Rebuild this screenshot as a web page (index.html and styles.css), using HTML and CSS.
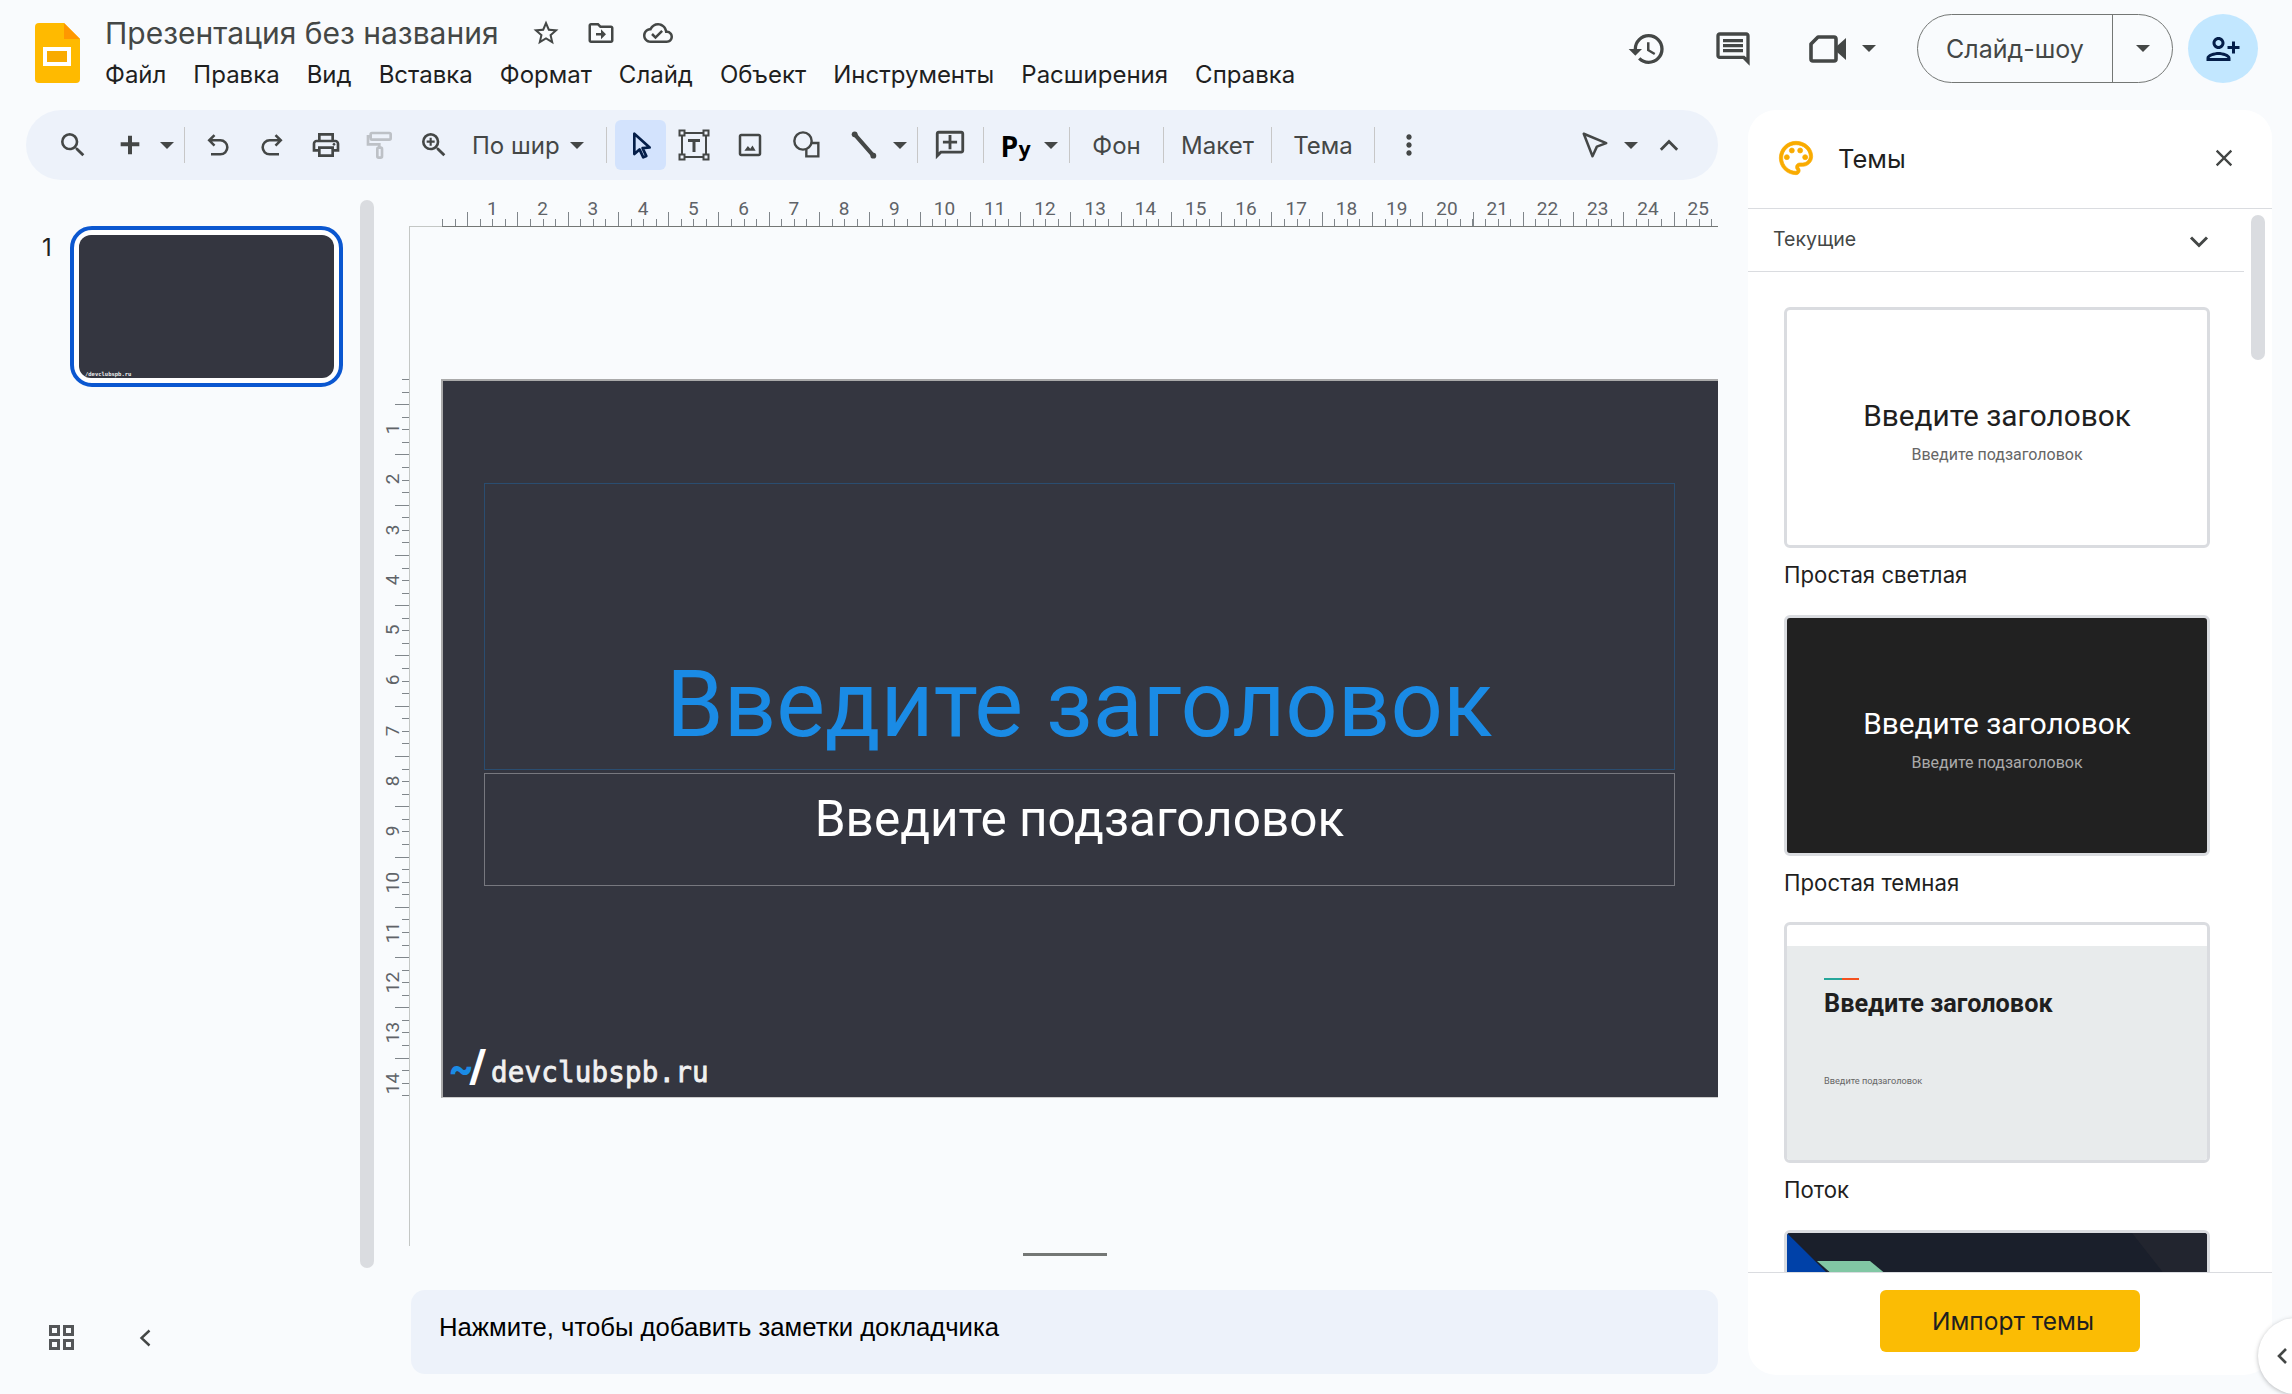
FILE: index.html
```html
<!DOCTYPE html>
<html lang="ru">
<head>
    <meta charset="UTF-8">
    <title>Презентация без названия</title>
    <link rel="stylesheet" href="styles.css">
</head>
<body>
    <header class="header">
        <svg class="logo" viewBox="0 0 45 60">
            <path d="M4 0H29L45 16V56a4 4 0 0 1-4 4H4a4 4 0 0 1-4-4V4a4 4 0 0 1 4-4z" fill="#ffba00"/>
            <path d="M29 0L45 16H29z" fill="#ff9800"/>
            <rect x="10" y="26" width="24" height="15" fill="#f9ab00" stroke="#fff" stroke-width="4"/>
        </svg>
        <div class="doc">
            <div class="doc-title">
                <span class="doc-name">Презентация без названия</span>
                <svg class="ic-30 star" viewBox="0 0 24 24"><path d="M22 9.24l-7.19-.62L12 2 9.19 8.63 2 9.24l5.46 4.73L5.82 21 12 17.27 18.18 21l-1.63-7.03L22 9.24zM12 15.4l-3.76 2.27 1-4.28-3.32-2.88 4.38-.38L12 6.1l1.71 4.04 4.38.38-3.32 2.88 1 4.28L12 15.4z"/></svg>
                <svg class="ic-30 move" viewBox="0 0 24 24"><path d="M20 6h-8l-2-2H4c-1.1 0-2 .9-2 2v12c0 1.1.9 2 2 2h16c1.1 0 2-.9 2-2V8c0-1.1-.9-2-2-2zm0 12H4V6h5.17l2 2H20v10zm-8-4H8v-2h4V9l4 4-4 4v-3z"/></svg>
                <svg class="ic-30 cloud" viewBox="0 0 24 24"><path d="M19.35 10.04C18.67 6.59 15.64 4 12 4 9.11 4 6.6 5.64 5.35 8.04 2.34 8.36 0 10.91 0 14c0 3.31 2.69 6 6 6h13c2.76 0 5-2.24 5-5 0-2.64-2.05-4.78-4.65-4.96zM19 18H6c-2.21 0-4-1.79-4-4 0-2.05 1.53-3.76 3.56-3.97l1.07-.11.5-.95C8.08 7.14 9.94 6 12 6c2.62 0 4.88 1.86 5.39 4.43l.3 1.5 1.53.11c1.56.1 2.78 1.41 2.78 2.96 0 1.65-1.35 3-3 3zm-9-3.82l-2.09-2.09L6.5 13.5 10 17l6.01-6.01-1.41-1.41z"/></svg>
            </div>
            <nav class="menu">
                <span>Файл</span><span>Правка</span><span>Вид</span><span>Вставка</span><span>Формат</span><span>Слайд</span><span>Объект</span><span>Инструменты</span><span>Расширения</span><span>Справка</span>
            </nav>
        </div>
        <div class="actions">
            <svg class="ic-40 history" viewBox="0 0 24 24"><path d="M13 3a9 9 0 0 0-9 9H1l3.89 3.89.07.14L9 12H6c0-3.87 3.13-7 7-7s7 3.13 7 7-3.13 7-7 7c-1.93 0-3.68-.79-4.94-2.06l-1.42 1.42A8.954 8.954 0 0 0 13 21a9 9 0 0 0 0-18zm-1 5v5l4.28 2.54.72-1.21-3.5-2.08V8H12z"/></svg>
            <svg class="ic-40 comments" viewBox="0 0 24 24"><path d="M21.99 4c0-1.1-.89-2-1.99-2H4c-1.1 0-2 .9-2 2v12c0 1.1.9 2 2 2h14l4 4-.01-18zM20 4v13.17L18.83 16H4V4h16zM6 12h12v2H6zm0-3h12v2H6zm0-3h12v2H6z"/></svg>
            <svg class="ic-40 meet" viewBox="0 0 40 40"><path d="M10 8h16a2 2 0 0 1 2 2v20a2 2 0 0 1-2 2H5a2 2 0 0 1-2-2V15z" fill="none" stroke="#444746" stroke-width="3.600" stroke-linejoin="round"/><path d="M29 17l9-8v22l-9-8z" fill="#444746"/></svg>
            <span class="caret meet-caret"></span>
            <div class="show-btn">
                <span class="show-label">Слайд-шоу</span>
                <span class="show-drop"><span class="caret"></span></span>
            </div>
            <div class="share">
                <svg class="ic-36" viewBox="0 0 24 24"><g transform="matrix(-1 0 0 1 24 0)"><path d="M15 12c2.21 0 4-1.79 4-4s-1.79-4-4-4-4 1.79-4 4 1.79 4 4 4zm0-6c1.1 0 2 .9 2 2s-.9 2-2 2-2-.9-2-2 .9-2 2-2zm0 8c-2.67 0-8 1.34-8 4v2h16v-2c0-2.66-5.33-4-8-4zm-6 4c.22-.72 3.31-2 6-2 2.7 0 5.8 1.29 6 2H9zm-3-3v-3h3v-2H6V7H4v3H1v2h3v3h2z"/></g></svg>
            </div>
        </div>
    </header>

    <div class="page">
        <div class="left">
            <div class="toolbar">
                <span class="tb w54"><svg class="ic-32" viewBox="0 0 24 24"><path d="M15.5 14h-.79l-.28-.27A6.471 6.471 0 0 0 16 9.5 6.5 6.5 0 1 0 9.5 16c1.61 0 3.09-.59 4.23-1.57l.27.28v.79l5 4.99L20.49 19l-4.99-5zm-6 0C7.01 14 5 11.99 5 9.5S7.01 5 9.5 5 14 7.01 14 9.5 11.99 14 9.5 14z"/></svg></span>
                <span class="tb w60"><svg class="ic-32" viewBox="0 0 24 24"><path d="M19 13h-5.500v6h-3v-6H5v-3h5.500V5h3v5H19z"/></svg></span>
                <span class="tb w14"><span class="caret"></span></span>
                <span class="sep s-10-6"></span>
                <span class="tb w54"><svg class="ic-28" viewBox="0 0 24 24"><path d="M9 3.500L4.500 8 9 12.500M4.500 8H14a6 6 0 0 1 0 12H6" fill="none" stroke="#444746" stroke-width="2.200"/></svg></span>
                <span class="tb w54"><svg class="ic-28" viewBox="0 0 24 24"><path d="M15 3.500L19.500 8 15 12.500M19.500 8H10a6 6 0 0 0 0 12h8" fill="none" stroke="#444746" stroke-width="2.200"/></svg></span>
                <span class="tb w54"><svg class="ic-32" viewBox="0 0 24 24"><path d="M19 8h-1V3H6v5H5c-1.66 0-3 1.34-3 3v6h4v4h12v-4h4v-6c0-1.66-1.34-3-3-3zM8 5h8v3H8V5zm8 12v2H8v-4h8v2zm2-2v-2H6v2H4v-4c0-.55.45-1 1-1h14c.55 0 1 .45 1 1v4h-2z"/><circle cx="18" cy="11.5" r="1"/></svg></span>
                <span class="tb w54"><svg class="ic-32" viewBox="0 0 24 24"><g fill="none" stroke="#bdc1c6" stroke-width="2"><rect x="5" y="3" width="15" height="5" rx="1"/><path d="M5 5.5H3v6h8.5V14"/><rect x="10" y="14" width="3.500" height="7.500" rx="1"/></g></svg></span>
                <span class="tb w54"><svg class="ic-32" viewBox="0 0 24 24"><path d="M15.500 14h-.79l-.28-.27A6.471 6.471 0 0 0 16 9.500 6.500 6.500 0 1 0 9.500 16c1.610 0 3.090-.59 4.230-1.570l.27.28v.79l5 4.990L20.490 19l-4.990-5zm-6 0C7.010 14 5 11.990 5 9.500S7.010 5 9.500 5 14 7.010 14 9.500 11.990 14 9.500 14z"/><path d="M12.500 10.300h-2.200v2.200H8.700v-2.200H6.500V8.700h2.200V6.500h1.600v2.200h2.200z"/></svg></span>
                <span class="tb-zoom">По шир</span>
                <span class="tb w14"><span class="caret"></span></span>
                <span class="sep s-22-8"></span>
                <span class="tb w51 active"><svg class="ic-32" viewBox="0 0 24 24"><path d="M7 3.500v15.300l3.900-3.500 2.800 6 2.300-1-2.800-6 5.300-.4z" fill="none" stroke="#041e49" stroke-width="2" stroke-linejoin="round"/></svg></span>
                <span class="tb w56"><svg class="ic-32" viewBox="0 0 32 32"><g fill="none" stroke="#444746" stroke-width="2"><rect x="1.500" y="1.500" width="5" height="5"/><rect x="25.500" y="1.500" width="5" height="5"/><rect x="1.500" y="25.500" width="5" height="5"/><rect x="25.500" y="25.500" width="5" height="5"/><path d="M6.500 4h19M6.500 28h19M4 6.500v19M28 6.500v19"/></g><path d="M10 10h12v3h-4.500v10h-3V13H10z" fill="#444746"/></svg></span>
                <span class="tb w56"><svg class="ic-30" viewBox="0 0 24 24"><path d="M19 5v14H5V5h14m0-2H5c-1.100 0-2 .9-2 2v14c0 1.100.9 2 2 2h14c1.100 0 2-.9 2-2V5c0-1.100-.9-2-2-2z"/><path d="M7.500 16.500l2.800-3.800 1.900 2.300 1.800-2.700 2.500 4.200z"/></svg></span>
                <span class="tb w58"><svg class="ic-32" viewBox="0 0 24 24"><g fill="none" stroke="#444746" stroke-width="1.800"><circle cx="9" cy="9" r="6.500"/><path d="M15 10.500h5.500v10h-9v-5"/></g></svg></span>
                <span class="tb w56"><svg class="ic-32" viewBox="0 0 24 24"><path d="M5 4l14 16" stroke="#444746" stroke-width="3" stroke-linecap="round"/><circle cx="5" cy="4" r="2.200"/><circle cx="19" cy="20" r="2.200"/></svg></span>
                <span class="tb w14 ml-1"><span class="caret"></span></span>
                <span class="sep s-10-5"></span>
                <span class="tb w54"><svg class="ic-34" viewBox="0 0 24 24"><path d="M20 2H4c-1.100 0-2 .9-2 2v18l4-4h14c1.100 0 2-.9 2-2V4c0-1.100-.9-2-2-2zm0 14H5.170L4 17.170V4h16v12zm-7-11h-2v4H7v2h4v4h2v-4h4V9h-4z"/></svg></span>
                <span class="sep s-6-5"></span>
                <span class="tb w54 input-tool">Р<small>у</small></span>
                <span class="tb w14 ml-1"><span class="caret"></span></span>
                <span class="sep s-11-0"></span>
                <span class="tb-text w93">Фон</span>
                <span class="sep"></span>
                <span class="tb-text w107">Макет</span>
                <span class="sep"></span>
                <span class="tb-text w102">Тема</span>
                <span class="sep"></span>
                <span class="tb w68"><svg class="ic-32" viewBox="0 0 24 24"><path d="M12 8c1.100 0 2-.9 2-2s-.9-2-2-2-2 .9-2 2 .9 2 2 2zm0 2c-1.100 0-2 .9-2 2s.9 2 2 2 2-.9 2-2-.9-2-2-2zm0 6c-1.100 0-2 .9-2 2s.9 2 2 2 2-.9 2-2-.9-2-2-2z"/></svg></span>
                <span class="tb w50 push"><svg class="ic-30" viewBox="0 0 24 24"><path d="M3 3l18 7.500-7.500 2.800L10 21z" fill="none" stroke="#444746" stroke-width="2" stroke-linejoin="round"/></svg></span>
                <span class="tb w14 ml-4"><span class="caret"></span></span>
                <span class="tb w40 ml-11"><svg class="ic-28" viewBox="0 0 24 24"><path d="M5 16l7-7 7 7" fill="none" stroke="#444746" stroke-width="2.400"/></svg></span>
            </div>

            <div class="work">
                <aside class="film">
                    <div class="film-item">
                        <span class="film-num">1</span>
                        <div class="thumb-frame">
                            <div class="thumb"><span class="thumb-logo">/devclubspb.ru</span></div>
                        </div>
                    </div>
                    <div class="film-foot">
                        <svg class="grid-ic" viewBox="0 0 25 25"><g fill="none" stroke="#545658" stroke-width="3"><rect x="1.500" y="1.500" width="8" height="8"/><rect x="15.500" y="1.500" width="8" height="8"/><rect x="1.500" y="15.500" width="8" height="8"/><rect x="15.500" y="15.500" width="8" height="8"/></g></svg>
                        <svg class="back-ic" viewBox="0 0 12 18"><path d="M10.500 1.500L2.500 9l8 7.500" fill="none" stroke="#444746" stroke-width="2.400"/></svg>
                    </div>
                </aside>
                <div class="vscroll"></div>
                <main class="editor">
                    <div class="stage">
                        <div class="corner"></div>
                        <div class="hruler">
                            <div class="hticks">
                                <span>1</span><span>2</span><span>3</span><span>4</span><span>5</span><span>6</span><span>7</span><span>8</span><span>9</span><span>10</span><span>11</span><span>12</span><span>13</span><span>14</span><span>15</span><span>16</span><span>17</span><span>18</span><span>19</span><span>20</span><span>21</span><span>22</span><span>23</span><span>24</span><span>25</span>
                            </div>
                        </div>
                        <div class="vruler">
                            <div class="vticks">
                                <span>1</span><span>2</span><span>3</span><span>4</span><span>5</span><span>6</span><span>7</span><span>8</span><span>9</span><span>10</span><span>11</span><span>12</span><span>13</span><span>14</span>
                            </div>
                        </div>
                        <div class="viewport">
                            <div class="slide">
                                <div class="ph ph-title"><span>Введите заголовок</span></div>
                                <div class="ph ph-sub"><span>Введите подзаголовок</span></div>
                                <div class="brand"><span class="tilde">~</span><span class="slash">/</span><span class="domain">devclubspb.ru</span></div>
                            </div>
                        </div>
                    </div>
                    <div class="handle"></div>
                    <div class="notes">Нажмите, чтобы добавить заметки докладчика</div>
                </main>
            </div>
        </div>

        <aside class="panel">
            <div class="panel-head">
                <svg class="ic-40 palette" viewBox="0 0 24 24"><path d="M12 22C6.490 22 2 17.510 2 12S6.490 2 12 2s10 4.040 10 9c0 3.310-2.690 6-6 6h-1.770c-.28 0-.5.22-.5.5 0 .12.05.23.13.33.41.47.64 1.060.64 1.670A2.500 2.500 0 0 1 12 22zm0-18c-4.410 0-8 3.590-8 8s3.590 8 8 8c.28 0 .5-.22.5-.5a.54.54 0 0 0-.14-.35c-.41-.46-.63-1.050-.63-1.650a2.500 2.500 0 0 1 2.500-2.500H16c2.210 0 4-1.790 4-4 0-3.860-3.590-7-8-7z"/><circle cx="6.500" cy="11.500" r="1.500"/><circle cx="9.500" cy="7.500" r="1.500"/><circle cx="14.500" cy="7.500" r="1.500"/><circle cx="17.500" cy="11.500" r="1.500"/></svg>
                <span class="panel-title">Темы</span>
                <svg class="ic-28 close" viewBox="0 0 24 24"><path d="M19 6.410L17.590 5 12 10.590 6.410 5 5 6.410 10.590 12 5 17.590 6.410 19 12 13.410 17.590 19 19 17.590 13.410 12z"/></svg>
            </div>
            <div class="panel-section">
                <span>Текущие</span>
                <svg class="chev" viewBox="0 0 20 14"><path d="M2 2.500l8 8 8-8" fill="none" stroke="#444746" stroke-width="3"/></svg>
            </div>
            <div class="panel-list">
                <div class="theme">
                    <div class="card card-light">
                        <div class="t-main">Введите заголовок</div>
                        <div class="t-sub">Введите подзаголовок</div>
                    </div>
                    <div class="theme-name">Простая светлая</div>
                </div>
                <div class="theme">
                    <div class="card card-dark">
                        <div class="t-main">Введите заголовок</div>
                        <div class="t-sub">Введите подзаголовок</div>
                    </div>
                    <div class="theme-name">Простая темная</div>
                </div>
                <div class="theme">
                    <div class="card card-flow">
                        <div class="flow-body">
                            <div class="flow-line"></div>
                            <div class="flow-title">Введите заголовок</div>
                            <div class="flow-sub">Введите подзаголовок</div>
                        </div>
                    </div>
                    <div class="theme-name">Поток</div>
                </div>
                <div class="theme">
                    <div class="card card-navy">
                        <svg class="navy-art" viewBox="0 0 420 235">
                            <path d="M0 0L42 40H0z" fill="#0041a8"/>
                            <path d="M0 0L42 42L44 42 2 0z" fill="#1a1f2b"/>
                            <path d="M30 28H83L100 42H46z" fill="#81c7a4"/>
                            <path d="M345 0H420V42H378z" fill="#22252f"/>
                        </svg>
                    </div>
                </div>
            </div>
            <div class="panel-foot">
                <div class="import-btn">Импорт темы</div>
            </div>
            <div class="panel-scroll"></div>
        </aside>
    </div>

    <div class="collapse-tab">
        <svg viewBox="0 0 12 18"><path d="M10 2L3 9l7 7" fill="none" stroke="#444746" stroke-width="2.600"/></svg>
    </div>
</body>
</html>
```

FILE: styles.css
```css
* {
    box-sizing: border-box;
}

html, body {
    margin: 0;
    height: 100%;
}

body {
    width: 2292px;
    height: 1394px;
    overflow: hidden;
    position: relative;
    background: #f9fbfd;
    font-family: Inter, Roboto, sans-serif;
    color: #1f1f1f;
    fill: #444746;
}

svg {
    display: block;
    flex: none;
}

.ic-28 { width: 28px; height: 28px; }
.ic-30 { width: 30px; height: 30px; }
.ic-32 { width: 32px; height: 32px; }
.ic-34 { width: 34px; height: 34px; }
.ic-36 { width: 36px; height: 36px; }
.ic-40 { width: 40px; height: 40px; }

.caret {
    display: block;
    width: 0;
    height: 0;
    border-left: 7px solid transparent;
    border-right: 7px solid transparent;
    border-top: 7px solid #444746;
}

/* header */
.header {
    display: flex;
    height: 110px;
}

.logo {
    width: 45px;
    height: 60px;
    margin: 23px 0 0 35px;
}

.doc {
    margin-left: 25px;
    padding-top: 14px;
}

.doc-title {
    display: flex;
    align-items: center;
    height: 38px;
}

.doc-name {
    font-size: 30px;
    color: #444746;
    line-height: 38px;
}

.star { margin-left: 32px; }
.move { margin-left: 25px; }
.cloud { margin-left: 27px; }

.menu {
    display: flex;
    gap: 27px;
    margin-top: 8px;
    font-size: 24px;
    line-height: 30px;
}

.actions {
    display: flex;
    align-items: center;
    height: 69px;
    margin: 14px 34px 0 auto;
}

.comments { margin-left: 46px; }
.meet { margin-left: 55px; }
.meet-caret { margin: 0 41px 0 14px; }

.show-btn {
    display: flex;
    width: 256px;
    height: 69px;
    border: 1.500px solid #747775;
    border-radius: 35px;
}

.show-label {
    display: flex;
    align-items: center;
    justify-content: center;
    width: 195px;
    border-right: 1.500px solid #747775;
    font-size: 25px;
    color: #444746;
}

.show-drop {
    display: flex;
    align-items: center;
    justify-content: center;
    flex: 1;
}

.share {
    display: flex;
    align-items: center;
    justify-content: center;
    width: 70px;
    height: 69px;
    margin-left: 15px;
    border-radius: 50%;
    background: #c2e7ff;
    fill: #041e49;
}

/* page columns */
.page {
    display: flex;
    height: 1284px;
}

.left {
    width: 1748px;
}

/* toolbar */
.toolbar {
    display: flex;
    align-items: center;
    width: 1692px;
    height: 70px;
    margin-left: 26px;
    padding: 0 29px 0 20px;
    border-radius: 35px;
    background: #edf2fa;
}

.tb {
    display: flex;
    align-items: center;
    justify-content: center;
    flex: none;
    height: 50px;
    border-radius: 6px;
}

.w14 { width: 14px; }
.w40 { width: 40px; }
.w50 { width: 50px; }
.w51 { width: 51px; }
.w54 { width: 54px; }
.w56 { width: 56px; }
.w58 { width: 58px; }
.w60 { width: 60px; }
.w68 { width: 68px; }
.w93 { width: 93px; }
.w102 { width: 102px; }
.w107 { width: 107px; }

.ml-1 { margin-left: 1px; }
.ml-4 { margin-left: 4px; }
.ml-11 { margin-left: 11px; }
.push { margin-left: auto; }

.active {
    background: #d3e3fd;
}

.sep {
    flex: none;
    width: 1px;
    height: 36px;
    background: #c7c7c7;
}

.s-10-6 { margin: 0 6px 0 10px; }
.s-22-8 { margin: 0 8px 0 22px; }
.s-10-5 { margin: 0 5px 0 10px; }
.s-6-5 { margin: 0 5px 0 6px; }
.s-11-0 { margin: 0 0 0 11px; }

.tb-zoom {
    flex: none;
    width: 109px;
    padding-left: 11px;
    font-size: 24px;
    color: #444746;
}

.tb-text {
    flex: none;
    text-align: center;
    font-size: 24px;
    color: #444746;
}

.input-tool {
    align-items: baseline;
    padding-top: 10px;
    font-family: "DejaVu Sans Mono", monospace;
    font-weight: 700;
    font-size: 29px;
    color: #000;
}

.input-tool small {
    font-size: 22px;
}

/* work area */
.work {
    display: flex;
    height: 1214px;
}

.film {
    display: flex;
    flex-direction: column;
    width: 360px;
    padding: 46px 0 44px;
}

.film-item {
    display: flex;
    padding-left: 42px;
}

.film-num {
    width: 28px;
    margin-top: 8px;
    font-size: 24px;
    line-height: 28px;
}

.thumb-frame {
    width: 273px;
    height: 161px;
    padding: 5px;
    border: 4px solid #0b57d0;
    border-radius: 22px;
    background: #fff;
}

.thumb {
    position: relative;
    height: 100%;
    border-radius: 12px;
    background: #343640;
    overflow: hidden;
}

.thumb-logo {
    position: absolute;
    left: 6px;
    bottom: 1px;
    font: 700 5.500px "DejaVu Sans Mono", monospace;
    color: #eee;
}

.film-foot {
    display: flex;
    align-items: center;
    margin-top: auto;
    padding-left: 49px;
}

.grid-ic {
    width: 25px;
    height: 25px;
}

.back-ic {
    width: 12px;
    height: 18px;
    margin-left: 65px;
}

.vscroll {
    flex: none;
    width: 14px;
    height: 1068px;
    margin-top: 20px;
    border-radius: 7px;
    background: #dadce0;
}

.editor {
    width: 1344px;
}

.stage {
    display: grid;
    grid-template-columns: 35px 1309px;
    grid-template-rows: 47px 1019px;
}

.hruler {
    display: flex;
    align-items: flex-end;
    padding-left: 33px;
    border-bottom: 1px solid #c4c7c5;
}

/* half-cm ticks, quarter ticks */
.hticks {
    display: flex;
    width: 1276px;
    height: 31px;
    margin-bottom: -1px;
    padding-left: 25.130px;
    border-bottom: 1px solid #747775;
    background:
        repeating-linear-gradient(90deg, transparent 0 25.130px, #80868b 25.130px 26.130px, transparent 26.130px 50.270px) left bottom / 100% 14px no-repeat,
        repeating-linear-gradient(90deg, #80868b 0 1px, transparent 1px 12.567px) left bottom / 100% 7px no-repeat;
}

.hticks span {
    flex: none;
    width: 50.250px;
    text-align: center;
    font-family: Roboto, sans-serif;
    font-size: 19px;
    line-height: 26px;
    color: #5f6368;
}

.vruler {
    padding-top: 152px;
}

.vticks {
    display: flex;
    flex-direction: column;
    width: 35px;
    height: 718px;
    padding-top: 25.130px;
    background:
        repeating-linear-gradient(180deg, transparent 0 25.130px, #80868b 25.130px 26.130px, transparent 26.130px 50.270px) right top / 14px 100% no-repeat,
        repeating-linear-gradient(180deg, #80868b 0 1px, transparent 1px 12.567px) right top / 7px 100% no-repeat;
}

.vticks span {
    flex: none;
    width: 38px;
    height: 50.270px;
    text-align: center;
    writing-mode: vertical-rl;
    transform: rotate(180deg);
    font-family: Roboto, sans-serif;
    font-size: 19px;
    line-height: 38px;
    color: #5f6368;
}

.viewport {
    padding: 152px 0 0 31px;
    border-left: 1px solid #c4c7c5;
}

.slide {
    position: relative;
    width: 1277px;
    height: 719px;
    background: #343640;
    border-left: 2px solid #aaa;
    border-top: 2px solid #aaa;
    border-bottom: 1px solid #ccc;
}

.ph {
    position: absolute;
    left: 41px;
    width: 1191px;
    display: flex;
    justify-content: center;
    border: 1px solid #2a4d70;
    font-family: Roboto, sans-serif;
}

.ph-title {
    top: 102px;
    height: 287px;
    align-items: flex-end;
    padding-bottom: 10px;
    font-size: 92px;
    line-height: 108px;
    color: #1a8be5;
}

.ph-sub {
    top: 392px;
    height: 113px;
    padding-top: 15px;
    border-color: #77787f;
    font-size: 49.500px;
    line-height: 60px;
    color: #fff;
}

.brand {
    position: absolute;
    left: 6px;
    bottom: 4px;
    display: flex;
    align-items: baseline;
    color: #f1f1f1;
}

.tilde {
    width: 21px;
    font: 900 38px Roboto, sans-serif;
    color: #1a8be5;
}

.slash {
    width: 21px;
    font: 900 46px Roboto, sans-serif;
    color: #fff;
}

.domain {
    font-family: "DejaVu Sans Mono", monospace;
    font-size: 27.500px;
    letter-spacing: 0.200px;
    -webkit-text-stroke: 0.800px #f1f1f1;
}

.handle {
    width: 84px;
    height: 3px;
    margin: 7px 0 0 649px;
    background: #747775;
}

.notes {
    display: flex;
    align-items: center;
    width: 1307px;
    height: 84px;
    margin: 34px 0 0 37px;
    padding: 0 0 10px 28px;
    border-radius: 14px;
    background: #edf2fa;
    font-family: "Liberation Sans", Arial, sans-serif;
    font-size: 25.700px;
    color: #000;
}

/* themes panel */
.panel {
    position: relative;
    width: 524px;
    height: 1265px;
    border-radius: 28px;
    background: #fff;
    overflow: hidden;
}

.panel-head {
    display: flex;
    align-items: center;
    height: 99px;
    padding: 0 0 2px 28px;
    border-bottom: 1px solid #dadce0;
}

.palette {
    fill: #f9ab00;
    stroke: #f9ab00;
    stroke-width: 0.400px;
}

.panel-title {
    margin-left: 22px;
    font-size: 25.500px;
}

.close {
    margin: 0 34px 0 auto;
}

.panel-section {
    display: flex;
    align-items: center;
    height: 63px;
    margin-right: 28px;
    padding: 0 35px 2px 25px;
    border-bottom: 1px solid #dadce0;
    font-size: 19.500px;
    color: #444746;
}

.chev {
    width: 20px;
    height: 14px;
    margin: 6px 0 0 auto;
}

.panel-list {
    height: 1000px;
    padding: 35px 0 0 36px;
    overflow: hidden;
}

.theme {
    width: 426px;
    margin-bottom: 25.700px;
}

.card {
    height: 241px;
    border: 3px solid #dadce0;
    border-radius: 6px;
    overflow: hidden;
}

.card-light, .card-dark {
    display: flex;
    flex-direction: column;
    align-items: center;
    padding-top: 88px;
    font-family: Roboto, sans-serif;
}

.card-light { background: #fff; color: #1f1f1f; }
.card-dark { background: #212121; color: #fff; }

.t-main {
    font-size: 29.800px;
    line-height: 36px;
}

.t-sub {
    margin-top: 12px;
    font-size: 16px;
    line-height: 18px;
    color: #666;
}

.card-dark .t-sub {
    color: #aaa;
}

.card-flow {
    padding-top: 21px;
    background: #fff;
    font-family: Roboto, sans-serif;
}

.flow-body {
    height: 100%;
    padding: 32px 0 0 37px;
    background: #e8ebec;
}

.flow-line {
    width: 35px;
    height: 2px;
    background: linear-gradient(90deg, #26a69a 50%, #f4511e 50%);
}

.flow-title {
    margin-top: 7px;
    font-size: 25.300px;
    font-weight: 700;
    line-height: 34px;
    color: #1f1f1f;
}

.flow-sub {
    margin-top: 54px;
    font-size: 9.200px;
    line-height: 12px;
    color: #666;
}

.card-navy {
    background: #1a1f2b;
}

.navy-art {
    width: 100%;
}

.theme-name {
    margin-top: 13px;
    font-size: 22.200px;
    line-height: 28px;
}

.panel-foot {
    height: 103px;
    padding: 17px 0 0 132px;
    border-top: 1px solid #dadce0;
}

.import-btn {
    display: flex;
    align-items: center;
    justify-content: center;
    width: 260px;
    height: 62px;
    padding-left: 6px;
    border-radius: 6px;
    background: #fbbc04;
    font-size: 24.500px;
}

.panel-scroll {
    position: absolute;
    top: 105px;
    left: 503px;
    width: 14px;
    height: 145px;
    border-radius: 7px;
    background: #dadce0;
}

.collapse-tab {
    position: absolute;
    left: 2258px;
    top: 1318px;
    width: 76px;
    height: 76px;
    padding: 29px 0 0 18px;
    border-radius: 50%;
    background: #fff;
    box-shadow: 0 1px 4px rgba(60, 64, 67, 0.35);
}

.collapse-tab svg {
    width: 12px;
    height: 18px;
}
```
